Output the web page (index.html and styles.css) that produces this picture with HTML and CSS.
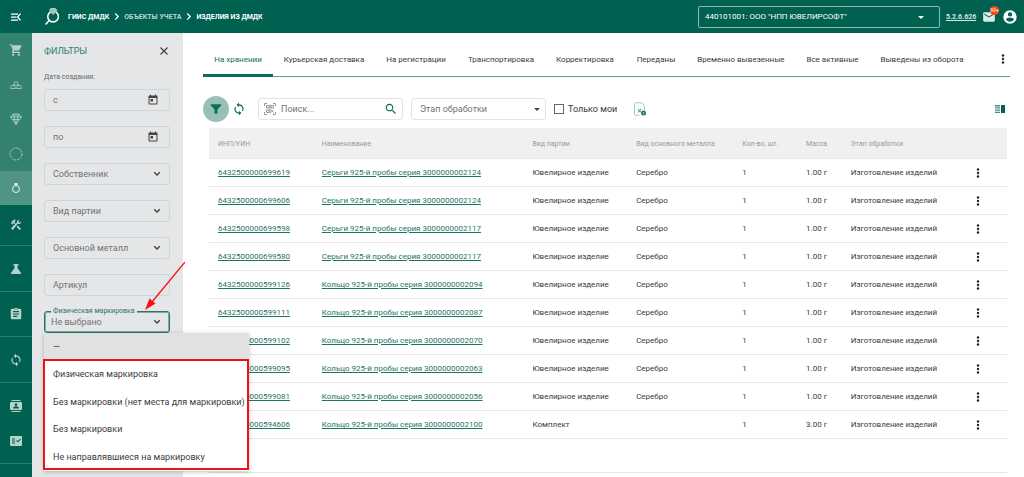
FILE: index.html
```html
<!DOCTYPE html>
<html lang="ru">
<head>
<meta charset="utf-8">
<meta name="viewport" content="width=device-width, initial-scale=1">
<title>Изделия из ДМДК</title>
<link rel="stylesheet" href="styles.css">
</head>
<body>
<svg class="sprite" aria-hidden="true">
  <symbol id="dots" viewBox="0 0 4 10"><circle cx="2" cy="1.500" r="1.200"/><circle cx="2" cy="5" r="1.200"/><circle cx="2" cy="8.500" r="1.200"/></symbol>
  <symbol id="chevron" viewBox="0 0 24 24"><path d="M7.400 7.600 12 12.200l4.600-4.600L18.500 9.500l-6.500 6.500-6.500-6.500z"/></symbol>
  <symbol id="next" viewBox="0 0 24 24"><path d="M6 3 15 12 6 21l3 3 12-12L9 0z"/></symbol>
  <symbol id="calendar" viewBox="0 0 24 24"><path d="M19 3h-1V1h-2v2H8V1H6v2H5a2 2 0 0 0-2 2v14a2 2 0 0 0 2 2h14a2 2 0 0 0 2-2V5a2 2 0 0 0-2-2zm0 16H5V8h14zM7 10h5v5H7z"/></symbol>
  <symbol id="sync" viewBox="0 0 24 24"><path d="M12 4V1L8 5l4 4V6a6 6 0 0 1 5.250 8.800l1.460 1.460A8 8 0 0 0 12 4zm0 14a6 6 0 0 1-5.250-8.800L5.290 7.740A8 8 0 0 0 12 20v3l4-4-4-4z"/></symbol>
</svg>

<header class="topbar">
  <button class="icon-button menu-toggle" aria-label="Свернуть меню"><svg class="i12" viewBox="0 0 24 24"><path d="M2 5h14v2.500H2zM2 11h11v2.500H2zM2 17h14v2.500H2zM22 6l-5 6 5 6-2 1.500L13.500 12 20 4.500z"/></svg></button>
  <svg class="logo" viewBox="0 0 16 18"><path d="M5.500 4A5.300 5.300 0 1 0 11 4.200M4.200 12.500 1 16" fill="none" stroke="#fff" stroke-width="1.600" stroke-linecap="round"/><path d="M5.500 0h5L12.500 2.500 8.200 7 4 2.500z" fill="#9fc9be"/></svg>
  <nav class="crumbs" aria-label="Навигация">
    <a href="#">ГИИС ДМДК</a><svg class="i7"><use href="#next"/></svg>
    <a href="#" class="dim">ОБЪЕКТЫ УЧЕТА</a><svg class="i7"><use href="#next"/></svg>
    <a href="#">ИЗДЕЛИЯ ИЗ ДМДК</a>
  </nav>
  <div class="account-select">
    <select aria-label="Организация"><option>440101001: ООО "НПП ЮВЕЛИРСОФТ"</option></select>
    <svg class="i8" viewBox="0 0 8 8"><path d="M1 3h6L4 6z"/></svg>
  </div>
  <a class="version" href="#">5.2.6.626</a>
  <button class="icon-button mail" aria-label="Сообщения"><svg class="i14" viewBox="0 0 24 24"><path d="M20 4H4a2 2 0 0 0-2 2v12a2 2 0 0 0 2 2h16a2 2 0 0 0 2-2V6a2 2 0 0 0-2-2zm0 4-8 5-8-5V6l8 5 8-5z"/></svg><span class="badge">99+</span></button>
  <button class="icon-button profile" aria-label="Профиль"><svg class="i16" viewBox="0 0 24 24"><path fill-rule="evenodd" d="M12 2a10 10 0 1 0 0 20 10 10 0 0 0 0-20zm0 3a3.200 3.200 0 1 1 0 6.400A3.200 3.200 0 0 1 12 5zm0 14.200a7.200 7.200 0 0 1-6-3.200c0-2 4-3.100 6-3.100s6 1.100 6 3.100a7.200 7.200 0 0 1-6 3.200z"/></svg></button>
</header>

<div class="layout">
  <nav class="rail" aria-label="Разделы">
    <a class="rail-item light" href="#" aria-label="Заказы"><svg class="i14" viewBox="0 0 24 24"><path d="M7 18a2 2 0 1 0 0 4 2 2 0 0 0 0-4zM1 2v2h2l3.600 7.600L5.200 14A2 2 0 0 0 7 17h12v-2H7.400l1.100-2H16a2 2 0 0 0 1.700-1L21.300 5.500A1 1 0 0 0 20.400 4H5.200L4.300 2zm16 16a2 2 0 1 0 0 4 2 2 0 0 0 0-4z"/></svg></a>
    <a class="rail-item light" href="#" aria-label="Слитки"><svg class="i12" viewBox="0 0 24 24"><path d="M7 12 9 6h6l2 6zM1 19l2-6h6l2 6zM13 19l2-6h6l2 6z" fill="none" stroke="currentColor" stroke-width="1.500"/></svg></a>
    <a class="rail-item light" href="#" aria-label="Камни"><svg class="i12" viewBox="0 0 24 24"><path d="M6 2h12l5 6-11 15L1 8zM1 8h22M8 8l4 15 4-15M6 2l2 6 4-6 4 6 2-6M4 13h16" fill="none" stroke="currentColor" stroke-width="1.600"/></svg></a>
    <a class="rail-item light" href="#" aria-label="Сырьё"><svg class="i14" viewBox="0 0 14 14"><circle cx="7" cy="7" r="6" fill="none" stroke="currentColor" stroke-dasharray="2 1"/></svg></a>
    <a class="rail-item active" href="#" aria-label="Изделия"><svg class="i12" viewBox="0 0 12 12"><circle cx="6" cy="7" r="3.500" fill="none" stroke="currentColor"/><path d="M5 1h2l1 1.200L6 4 4 2.200z"/></svg></a>
    <a class="rail-item row" href="#" aria-label="Производство"><svg class="i12" viewBox="0 0 24 24"><path d="M22 19.500 15.500 13l-2.500 2.500 6.500 6.500zM17 10a4 4 0 0 0 4.700-5.200L19 7.500 16.500 5l2.700-2.700A4 4 0 0 0 14 7l-2.500 2.500-2-2 1-1-1.500-1.500L12 2a4 4 0 0 0-5 0L3.500 5.500 5 7H2l-.7.7L5 11.400l.7-.7V8L7 9.500l1-1 2 2L2 18.500 5.500 22l10-12.500z"/></svg></a>
    <a class="rail-item row tall" href="#" aria-label="Опробование"><svg class="i12" viewBox="0 0 24 24"><path d="M7 2h10v3h-2v5l7 10v2H2v-2l7-10V5H7z"/></svg></a>
    <a class="rail-item row mid" href="#" aria-label="Отчёты"><svg class="i14" viewBox="0 0 24 24"><path fill-rule="evenodd" d="M19 3h-4.200a3 3 0 0 0-5.600 0H5a2 2 0 0 0-2 2v14a2 2 0 0 0 2 2h14a2 2 0 0 0 2-2V5a2 2 0 0 0-2-2zm-7 0a1 1 0 1 1 0 2 1 1 0 0 1 0-2zM7 7h10v2H7zm0 4h10v2H7zm0 4h7v2H7z"/></svg></a>
    <a class="rail-item row tall" href="#" aria-label="Обмен"><svg class="i14"><use href="#sync"/></svg></a>
    <a class="rail-item mid" href="#" aria-label="Контакты"><svg class="i12" viewBox="0 0 24 24"><path fill-rule="evenodd" d="M3 0h18v2H3zM3 22h18v2H3zM2 4h20a2 2 0 0 1 2 2v12a2 2 0 0 1-2 2H2a2 2 0 0 1-2-2V6a2 2 0 0 1 2-2zm10 2.500a2.700 2.700 0 1 0 0 5.400 2.700 2.700 0 0 0 0-5.400zM6.500 17h11v-1.500c0-1.800-3.700-2.800-5.500-2.800s-5.500 1-5.500 2.800z"/></svg></a>
    <a class="rail-item row last" href="#" aria-label="Проверки"><svg class="i12" viewBox="0 0 24 24"><path fill-rule="evenodd" d="M2 2h20a2 2 0 0 1 2 2v16a2 2 0 0 1-2 2H2a2 2 0 0 1-2-2V4a2 2 0 0 1 2-2zM4 7v2h6V7zm0 4v2h6v-2zm0 4v2h6v-2zm11.800 0 6-6-1.500-1.500-4.500 4.500-2-2-1.500 1.500z"/></svg></a>
  </nav>

  <aside class="filters">
    <div class="filters-head"><h2>ФИЛЬТРЫ</h2><button class="icon-button" aria-label="Закрыть"><svg class="i8" viewBox="0 0 8 8"><path d="M.5.500l7 7M7.500.500l-7 7" stroke="#444" stroke-width="1.200"/></svg></button></div>
    <p class="filters-caption">Дата создания:</p>
    <div class="fields">
      <div class="field"><input type="text" placeholder="с" aria-label="Дата создания с"><button class="icon-button" aria-label="Календарь"><svg class="i12"><use href="#calendar"/></svg></button></div>
      <div class="field"><input type="text" placeholder="по" aria-label="Дата создания по"><button class="icon-button" aria-label="Календарь"><svg class="i12"><use href="#calendar"/></svg></button></div>
      <div class="field"><select aria-label="Собственник"><option>Собственник</option></select><svg class="i12"><use href="#chevron"/></svg></div>
      <div class="field"><select aria-label="Вид партии"><option>Вид партии</option></select><svg class="i12"><use href="#chevron"/></svg></div>
      <div class="field"><select aria-label="Основной металл"><option>Основной металл</option></select><svg class="i12"><use href="#chevron"/></svg></div>
      <div class="field"><input type="text" placeholder="Артикул" aria-label="Артикул"></div>
      <div class="field focused">
        <label for="marking">Физическая маркировка</label>
        <select id="marking"><option>Не выбрано</option></select><svg class="i12"><use href="#chevron"/></svg>
        <svg class="arrow" viewBox="0 0 40 50"><path d="M40 0 7 40" stroke="#fe0d10" stroke-width="1.300"/><path d="M0 48 4.500 36.500 10.500 41.500z" fill="#fe0d10"/></svg>
        <div class="menu">
          <ul role="listbox" aria-label="Физическая маркировка">
            <li role="option" aria-selected="true">—</li>
            <li role="option">Физическая маркировка</li>
            <li role="option">Без маркировки (нет места для маркировки)</li>
            <li role="option">Без маркировки</li>
            <li role="option">Не направлявшиеся на маркировку</li>
          </ul>
          <div class="highlight"></div>
        </div>
      </div>
    </div>
  </aside>

  <main class="content">
    <nav class="tabs" aria-label="Состояние">
      <a class="current" href="#">На хранении</a><a href="#">Курьерская доставка</a><a href="#">На регистрации</a><a href="#">Транспортировка</a><a href="#">Корректировка</a><a href="#">Переданы</a><a href="#">Временно вывезенные</a><a href="#">Все активные</a><a href="#">Выведены из оборота</a>
      <button class="icon-button more" aria-label="Ещё"><svg class="dots"><use href="#dots"/></svg></button>
    </nav>

    <div class="toolbar">
      <button class="icon-button filter-button" aria-label="Фильтр"><svg class="i14" viewBox="0 0 24 24"><path d="M4 4h16c1 0 1.400 1.200.8 2L14.500 13v6a1 1 0 0 1-1 1h-3a1 1 0 0 1-1-1v-6L3.200 6C2.600 5.200 3 4 4 4z"/></svg></button>
      <button class="icon-button refresh" aria-label="Обновить"><svg class="i14"><use href="#sync"/></svg></button>
      <div class="search">
        <svg class="i12" viewBox="0 0 24 24"><path d="M1 6V1h5M18 1h5v5M23 18v5h-5M6 23H1v-5M5 5h5v5H5zM14 5h5v5h-5zM5 14h5v5H5zM14 14l5 5M19 14l-5 5M12 3v18" fill="none" stroke="#858585" stroke-width="1.700"/></svg>
        <input type="text" placeholder="Поиск..." aria-label="Поиск">
        <button class="icon-button" aria-label="Найти"><svg class="i14 green" viewBox="0 0 24 24"><path fill-rule="evenodd" d="M15.500 14h-.8l-.3-.3A6.500 6.500 0 1 0 13.700 14.400l.3.300v.8l5 5 1.500-1.500zm-6 0a4.500 4.500 0 1 1 0-9 4.500 4.500 0 0 1 0 9z"/></svg></button>
      </div>
      <div class="stage"><select aria-label="Этап обработки"><option>Этап обработки</option></select><svg class="i8" viewBox="0 0 8 8"><path d="M1 3h6L4 6z"/></svg></div>
      <label class="mine"><input type="checkbox">Только мои</label>
      <button class="icon-button excel" aria-label="Выгрузить в Excel"><svg class="i14" viewBox="0 0 14 14"><path d="M6.500 13.300H2.500a1 1 0 0 1-1-1V1.700a1 1 0 0 1 1-1h4.500c2.500 0 4.500 2 4.500 4.500V8" fill="none" stroke="#9fd0b0"/><path d="m5 7 3 3.500M8 7l-3 3.500" stroke="#258a50"/><circle cx="10.500" cy="11" r="2.500" fill="#16803f"/><path d="M9.500 10.500h2l-1 1.500z" fill="#fff"/></svg></button>
      <button class="icon-button columns" aria-label="Вид таблицы"><svg class="i10" viewBox="0 0 10 10"><path d="M0 1h5v1.500H0zM0 3.300h5v1.200H0zM0 5.500h5v1.200H0zM0 7.700h5V9H0z" fill="#4c9082"/><path d="M6 1h4v8H6z"/></svg></button>
    </div>

    <table>
      <colgroup><col class="c-id"><col class="c-name"><col class="c-kind"><col class="c-metal"><col class="c-count"><col class="c-mass"><col class="c-stage"><col class="c-more"></colgroup>
      <thead><tr><th>ИНП/УИН</th><th>Наименование</th><th>Вид партии</th><th>Вид основного металла</th><th>Кол-во, шт.</th><th>Масса</th><th>Этап обработки</th><th></th></tr></thead>
      <tbody id="rows"></tbody>
    </table>
    <div class="table-foot"></div>
  </main>
</div>
<script src="rows.js"></script>
</body>
</html>
```

FILE: styles.css
```css
* { box-sizing: border-box; }
body {
  margin: 0;
  min-height: 100vh;
  display: flex;
  flex-direction: column;
  overflow: hidden;
  background: #fff;
  color: #3a3a3a;
  font: 8px/12px Roboto, "Noto Sans", sans-serif;
}
a { color: inherit; text-decoration: none; }
input, select, button { font: inherit; color: inherit; }
input, select { border: 0; padding: 0; background: transparent; outline: 0; min-width: 0; }
select { appearance: none; }
svg { display: block; flex: none; fill: currentColor; }
.sprite { position: absolute; width: 0; height: 0; }
.i7 { width: 7px; height: 7px; }
.i8 { width: 8px; height: 8px; }
.i10 { width: 10px; height: 10px; }
.i12 { width: 12px; height: 12px; }
.i14 { width: 14px; height: 14px; }
.i16 { width: 16px; height: 16px; }
.dots { width: 4px; height: 10px; color: #222; }
.green { color: #086b59; }
.icon-button { display: flex; align-items: center; justify-content: center; border: 0; padding: 0; background: none; }

.topbar { display: flex; align-items: center; height: 33px; padding-right: 6px; background: #006150; color: #fff; }
.menu-toggle { width: 32px; }
.logo { width: 16px; height: 18px; margin-left: 13px; }
.crumbs { display: flex; align-items: center; gap: 4px; margin-left: 7px; font-size: 7px; font-weight: 700; }
.crumbs .dim { color: #b9d6cf; }
.account-select { display: flex; align-items: center; width: 242px; height: 22px; margin-left: auto; padding: 0 14px 0 6px; border: 1px solid #8fbab1; border-radius: 2px; }
.account-select select { flex: 1; }
.version { margin-left: 6px; width: 29px; font-size: 7px; font-weight: 700; text-decoration: underline; white-space: nowrap; color: #d5e6e2; }
.mail { position: relative; margin-left: 7px; color: #dcebe8; }
.badge { position: absolute; left: 8px; top: -4px; width: 9px; height: 9px; border-radius: 50%; background: #f84b12; color: #fff; font-size: 5px; line-height: 9px; text-align: center; }
.profile { margin-left: 6px; }

.layout { flex: 1; display: flex; }
.rail { width: 32px; flex: none; background: #006150; color: #b5d3cc; }
.rail-item { display: flex; align-items: center; justify-content: center; height: 34px; }
.light { height: 35px; background: #338171; }
.light:first-child, .light:nth-child(3) { height: 34px; }
.active { height: 34px; background: #4f9586; color: #e5f1ee; }
.row { height: 41px; border-bottom: 1px solid #30796c; }
.tall { height: 46px; }
.mid { height: 45px; }
.last { height: 36px; align-items: flex-start; padding-top: 7px; }

.filters { width: 151px; flex: none; padding: 12px 13px 0 12px; background: #e4e6e8; }
.filters-head { display: flex; align-items: center; justify-content: space-between; padding-right: 2px; }
.filters-head h2 { margin: 0; color: #2b7d6e; font-size: 9px; font-weight: 400; line-height: 12px; }
.filters-caption { margin: 14px 0 6px; color: #666; font-size: 7px; line-height: 12px; }
.fields { display: grid; gap: 15px; }
.field { position: relative; display: flex; align-items: center; height: 22px; padding: 0 10px 0 8px; border: 1px solid #d1d4d6; border-radius: 3px; color: #444; font-size: 9px; }
.field input, .field select { flex: 1; width: 0; color: #737373; }
.field > .i12 { margin-right: -4px; }
::placeholder { color: #737373; opacity: 1; }
.focused { border: 1px solid #267767; box-shadow: 0 0 0 1px #82aaa2 inset; padding-left: 6px; }
.focused > label { position: absolute; left: 6px; top: -7px; padding: 0 2px; background: #e4e6e8; color: #267767; font-size: 7px; line-height: 12px; }
.arrow { position: absolute; left: 100px; top: -50px; width: 40px; height: 50px; }
.menu { position: absolute; z-index: 2; left: -1px; top: 21px; background: #fff; box-shadow: 0 1px 4px rgb(0 0 0 / 25%); }
.menu ul { margin: 0; padding: 0 0 1px; list-style: none; color: #3c3c3c; }
.menu li { padding: 8px 4px 7px 9px; line-height: 12px; white-space: nowrap; }
.menu li:nth-child(even) { padding-bottom: 8px; }
.menu li[aria-selected] { background: #e1e1e1; }
.highlight { position: absolute; left: -1px; top: 26px; right: 0; bottom: 1px; border: 2px solid #ee1118; }

.content { flex: 1; min-width: 0; padding: 9px 14px 0 20px; }
.tabs { display: grid; grid-template-columns: 70fr 102fr 82fr 88fr 80fr 62fr 108fr 75fr 104fr 36fr; height: 35px; border-bottom: 1px solid #5ea092; }
.tabs a { display: flex; align-items: center; justify-content: center; white-space: nowrap; padding-top: 1px; }
.tabs .current { color: #0b6d5b; border-bottom: 3px solid #0b6d5b; padding-top: 3px; margin-bottom: -1px; }
.tabs .more { padding-left: 22px; }

.toolbar { display: flex; align-items: center; height: 26px; margin-top: 19px; font-size: 9px; }
.filter-button { width: 26px; height: 26px; border-radius: 50%; background: #99c0b7; color: #08705e; }
.refresh { margin-left: 3px; color: #086b59; }
.search, .stage { display: flex; align-items: center; height: 22px; border: 1px solid #e3e3e3; border-radius: 3px; }
.search { width: 145px; margin-left: 12px; padding: 0 4px 0 5px; }
.search input { flex: 1; margin-left: 5px; }
.stage { width: 135px; margin-left: 8px; padding: 0 4px 0 8px; color: #444; }
.stage select { flex: 1; color: #737373; }
.mine { display: flex; align-items: center; gap: 4px; margin-left: 8px; }
.mine input { appearance: none; width: 10px; height: 10px; margin: 0; border: 1px solid #666; }
.excel { margin-left: 16px; }
.columns { margin-left: auto; margin-right: 5px; color: #006150; }

table { width: calc(100% - 9px); margin: 6px 3px 0 6px; table-layout: fixed; border-collapse: collapse; }
.c-id { width: 13%; }
.c-name { width: 26.4%; }
.c-kind { width: 13%; }
.c-metal { width: 13.3%; }
.c-count { width: 8%; }
.c-mass { width: 5.6%; }
.c-stage { width: 15.8%; }
.c-more { width: 4.9%; }
th, td { padding: 0 0 0 9px; text-align: left; white-space: nowrap; border-bottom: 1px solid #e6e6e6; }
th { height: 30px; padding-top: 2px; background: #f0f0f0; color: #999; font-size: 7px; font-weight: 400; }
td { height: 28px; padding-top: 2px; }
td a { color: #1e7464; text-decoration: underline; }
td .icon-button { width: 4px; margin-left: -1px; }
.table-foot { height: 34px; margin: 0 3px 0 6px; border-bottom: 1px solid #e6e6e6; }
```

FILE: rows.js
```js
const items = [
  ["6432500000699619", "Серьги 925-й пробы серия 3000000002124"],
  ["6432500000699606", "Серьги 925-й пробы серия 3000000002124"],
  ["6432500000699598", "Серьги 925-й пробы серия 3000000002117"],
  ["6432500000699580", "Серьги 925-й пробы серия 3000000002117"],
  ["6432500000599126", "Кольцо 925-й пробы серия 3000000002094"],
  ["6432500000599111", "Кольцо 925-й пробы серия 3000000002087"],
  ["6432500000599102", "Кольцо 925-й пробы серия 3000000002070"],
  ["6432500000599095", "Кольцо 925-й пробы серия 3000000002063"],
  ["6432500000599081", "Кольцо 925-й пробы серия 3000000002056"],
  ["6432500000594606", "Кольцо 925-й пробы серия 3000000002100", "Комплект", "", "3.00 г"]
];
document.getElementById("rows").innerHTML = items.map(
  ([id, name, kind = "Ювелирное изделие", metal = "Серебро", mass = "1.00 г"]) => `<tr>
    <td><a href="#">${id}</a></td><td><a href="#">${name}</a></td><td>${kind}</td><td>${metal}</td>
    <td>1</td><td>${mass}</td><td>Изготовление изделий</td>
    <td><button class="icon-button" aria-label="Действия"><svg class="dots"><use href="#dots"/></svg></button></td></tr>`
).join("");
```
